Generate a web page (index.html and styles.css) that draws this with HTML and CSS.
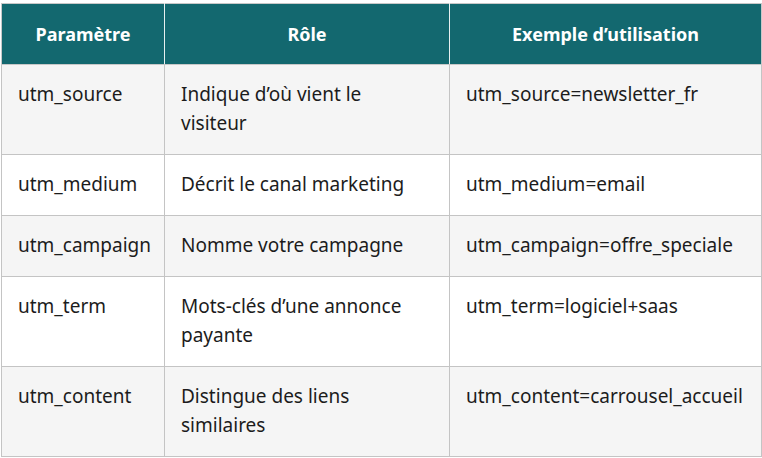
FILE: index.html
```html
<!DOCTYPE html>
<html lang="fr">
<head>
<meta charset="utf-8">
<link rel="stylesheet" href="styles.css">
</head>
<body>
<div class="wrap">
<table class="utm">
  <colgroup><col class="c1"><col class="c2"><col class="c3"></colgroup>
  <thead>
    <tr><th>Paramètre</th><th>Rôle</th><th>Exemple d’utilisation</th></tr>
  </thead>
  <tbody>
    <tr class="odd"><td>utm_source</td><td>Indique d’où vient le visiteur</td><td>utm_source=newsletter_fr</td></tr>
    <tr><td>utm_medium</td><td>Décrit le canal marketing</td><td>utm_medium=email</td></tr>
    <tr class="odd"><td>utm_campaign</td><td>Nomme votre campagne</td><td>utm_campaign=offre_speciale</td></tr>
    <tr><td>utm_term</td><td>Mots-clés d’une annonce payante</td><td>utm_term=logiciel+saas</td></tr>
    <tr class="odd"><td>utm_content</td><td>Distingue des liens similaires</td><td>utm_content=carrousel_accueil</td></tr>
  </tbody>
</table>
</div>
</body>
</html>
```
FILE: styles.css
```css
html, body { margin: 0; padding: 0; background: #fff; }
.wrap { padding: 3px 0 0 1px; }
.utm {
  border-collapse: collapse;
  width: 760px;
  table-layout: fixed;
  font-family: "Noto Sans", "Open Sans", sans-serif;
  font-size: 19px;
  color: #1c1c1c;
}
.c1 { width: 163px; }
.c2 { width: 285px; }
.c3 { width: 312px; }
.utm th {
  background: #13686f;
  color: #fff;
  font-weight: 700;
  font-size: 18px;
  height: 61px;
  padding: 0 16px;
  text-align: center;
  vertical-align: middle;
  border: 1px solid #c8c8c8;
  border-left-color: #e8f0f0;
  border-right-color: #e8f0f0;
  box-sizing: border-box;
}
.utm th:first-child { border-left-color: #c8c8c8; }
.utm th:last-child { border-right-color: #c8c8c8; }
.utm td {
  border: 1px solid #c4c4c4;
  padding: 15px 22px 16px 16px;
  line-height: 29px;
  vertical-align: top;
}
.utm tr.odd td { background: #f5f5f5; }
```
